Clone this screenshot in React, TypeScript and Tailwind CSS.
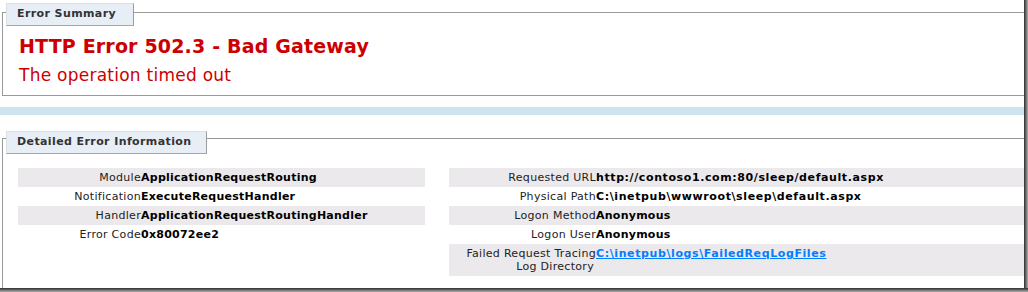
type Row = { label: string; value: string; second?: string; link?: boolean; wide?: boolean };

const leftRows: Row[] = [
  { label: "Module", value: "ApplicationRequestRouting" },
  { label: "Notification", value: "ExecuteRequestHandler" },
  { label: "Handler", value: "ApplicationRequestRoutingHandler" },
  { label: "Error Code", value: "0x80072ee2" },
];

const rightRows: Row[] = [
  { label: "Requested URL", value: "http://contoso1.com:80/sleep/default.aspx", wide: true },
  { label: "Physical Path", value: "C:\\inetpub\\wwwroot\\sleep\\default.aspx", wide: true },
  { label: "Logon Method", value: "Anonymous" },
  { label: "Logon User", value: "Anonymous" },
  {
    label: "Failed Request Tracing",
    second: "Log Directory",
    value: "C:\\inetpub\\logs\\FailedReqLogFiles",
    link: true,
    wide: true,
  },
];

function Legend({ title, width }: { title: string; width: string }) {
  return (
    <div
      className={`ml-[3px] flex h-[23px] items-center border border-t-[#d8e0e8] border-l-[#d8e0e8] border-r-[#9c9c9c] border-b-[#a8a8a8] bg-[#e8eef5] pl-[10px] text-[11px] font-bold tracking-[0.4px] text-[#333] ${width}`}
    >
      {title}
    </div>
  );
}

function DetailTable({ rows, labelWidth, className }: { rows: Row[]; labelWidth: string; className: string }) {
  return (
    <div className={`flex flex-col ${className}`}>
      {rows.map((row, i) => (
        <div
          key={row.label}
          className={`flex py-[3px] text-[11px] leading-[13px] ${i % 2 === 0 ? "bg-[#ece9ec]" : "bg-white"}`}
        >
          <div className={`shrink-0 text-right tracking-[0.3px] text-[#222] ${labelWidth}`}>
            {row.label}
            {row.second && (
              <>
                <br />
                <span className="mr-[2px]">{row.second}</span>
              </>
            )}
          </div>
          <div
            className={`whitespace-nowrap font-bold text-black ${row.wide ? "tracking-[0.6px]" : "tracking-[0.25px]"}`}
          >
            {row.link ? (
              <span className="text-[#007eff] underline">{row.value}</span>
            ) : (
              row.value
            )}
          </div>
        </div>
      ))}
    </div>
  );
}

export default function App() {
  return (
    <div className="flex h-[292px] w-[1028px] flex-col bg-white font-['DejaVu_Sans',Verdana,sans-serif]">
      <div className="flex h-[288px]">
        <div className="h-[288px] w-[1024px] overflow-hidden bg-white">
          {/* Error summary */}
          <div className="ml-[2px] mt-[12px] h-[84px] border-b border-l border-t border-[#999]">
            <div className="-mt-[10px]">
              <Legend title="Error Summary" width="w-[128px]" />
            </div>
            <div className="ml-[16px] mt-[9px]">
              <h2 className="text-[19px] font-bold leading-[23px] tracking-[0.17px] text-[#cc0000]">
                HTTP Error 502.3 - Bad Gateway
              </h2>
              <p className="mt-[7px] text-[17px] leading-[21px] tracking-[0.25px] text-[#cc0000]">
                The operation timed out
              </p>
            </div>
          </div>

          <div className="mt-[11px] h-[8px] w-full bg-[#cfe3ef]" />

          {/* Detailed error information */}
          <div className="ml-[2px] mt-[23px] h-[150px] border-l border-t border-[#999]">
            <div className="-mt-[8px]">
              <Legend title="Detailed Error Information" width="w-[201px]" />
            </div>
            <div className="ml-[15px] mt-[14px] flex gap-[24px]">
              <DetailTable rows={leftRows} labelWidth="w-[123px]" className="w-[407px] shrink-0" />
              <DetailTable rows={rightRows} labelWidth="w-[147px]" className="flex-1" />
            </div>
          </div>
        </div>
        <div className="h-full w-[4px] bg-linear-to-r from-[#2e2e2e] to-[#b0b0b0]" />
      </div>
      <div className="h-[4px] w-full bg-linear-to-b from-[#2e2e2e] to-[#b0b0b0]" />
    </div>
  );
}
